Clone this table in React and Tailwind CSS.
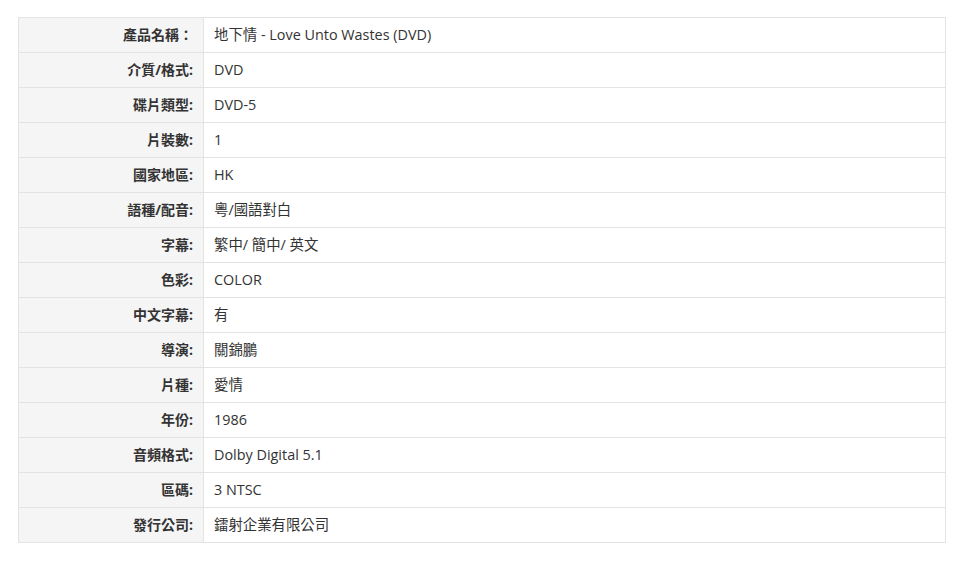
import React from "react";

const rows = [
  ["產品名稱：", "地下情 - Love Unto Wastes (DVD)"],
  ["介質/格式:", "DVD"],
  ["碟片類型:", "DVD-5"],
  ["片裝數:", "1"],
  ["國家地區:", "HK"],
  ["語種/配音:", "粵/國語對白"],
  ["字幕:", "繁中/ 簡中/ 英文"],
  ["色彩:", "COLOR"],
  ["中文字幕:", "有"],
  ["導演:", "關錦鵬"],
  ["片種:", "愛情"],
  ["年份:", "1986"],
  ["音頻格式:", "Dolby Digital 5.1"],
  ["區碼:", "3 NTSC"],
  ["發行公司:", "鐳射企業有限公司"],
];

export default function App() {
  return (
    <div
      className="min-h-screen bg-white pt-[17px] pl-[18px] pr-[19px] text-[14px] text-[#333]"
      style={{ fontFamily: '"Open Sans", "Noto Sans CJK TC", sans-serif' }}
    >
      <table className="w-[928px] border-collapse border border-[#e3e3e3]">
        <tbody>
          {rows.map(([label, value]) => (
            <tr key={label} className="h-[35px]">
              <th className="w-[185px] border border-[#e3e3e3] bg-[#f5f5f5] pr-[10px] text-right font-bold leading-none">
                {label}
              </th>
              <td className="border border-[#e3e3e3] pl-[10px] text-left text-[14.4px] leading-none">
                {value}
              </td>
            </tr>
          ))}
        </tbody>
      </table>
    </div>
  );
}
